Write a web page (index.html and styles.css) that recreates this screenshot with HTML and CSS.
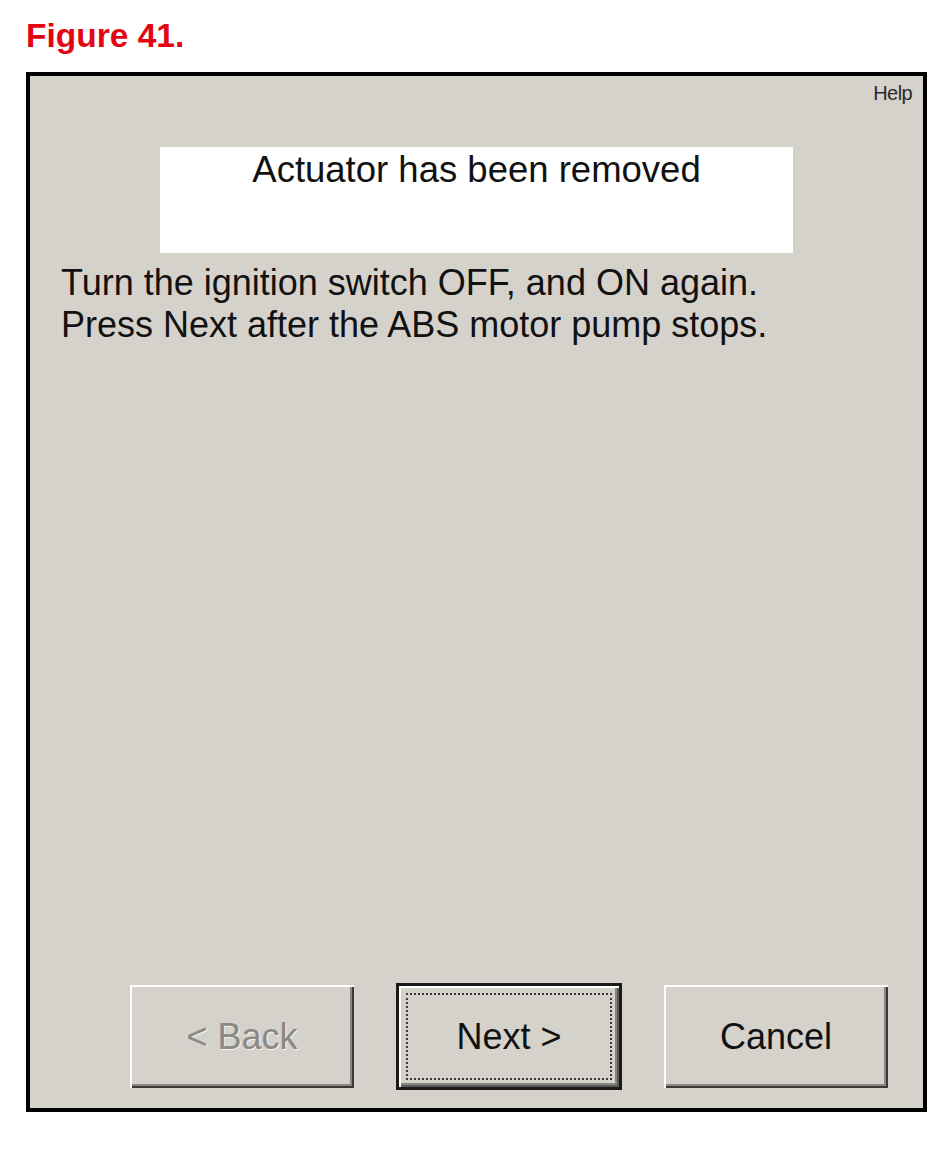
FILE: index.html
```html
<!DOCTYPE html>
<html>
<head>
<meta charset="utf-8">
<link rel="stylesheet" href="styles.css">
</head>
<body>
<h1 class="fig-title">Figure 41.</h1>
<div class="dialog">
  <div class="help-row"><span class="help">Help</span></div>
  <div class="status-box">Actuator has been removed</div>
  <p class="instructions">Turn the ignition switch OFF, and ON again.<br>Press Next after the ABS motor pump stops.</p>
  <div class="spacer"></div>
  <div class="button-row">
    <button class="btn btn-disabled">&lt; Back</button>
    <button class="btn btn-default"><span class="focus">Next &gt;</span></button>
    <button class="btn">Cancel</button>
  </div>
</div>
</body>
</html>
```
FILE: styles.css
```css
html, body {
  margin: 0;
  padding: 0;
  background: #ffffff;
}
body {
  font-family: "Liberation Sans", Arial, sans-serif;
  width: 949px;
  height: 1153px;
  overflow: hidden;
}
.fig-title {
  margin: 0;
  padding: 18px 0 0 26px;
  height: 72px;
  box-sizing: border-box;
  font-size: 33.5px;
  line-height: 36px;
  font-weight: bold;
  color: #e30613;
}
.dialog {
  margin-left: 26px;
  width: 901px;
  height: 1040px;
  box-sizing: border-box;
  border: 4px solid #000;
  background: #d5d1cb;
  display: flex;
  flex-direction: column;
}
.help-row {
  display: flex;
  justify-content: flex-end;
  padding: 7px 11px 0 0;
}
.help {
  font-size: 20px;
  line-height: 20px;
  color: #2a2a2a;
  letter-spacing: -0.6px;
}
.status-box {
  margin: 44px 0 0 130px;
  width: 633px;
  height: 106px;
  box-sizing: border-box;
  padding-top: 5px;
  background: #fff;
  text-align: center;
  font-size: 36.5px;
  line-height: 35px;
  color: #111;
}
.instructions {
  margin: 9px 0 0 0;
  padding-left: 31px;
  font-size: 36px;
  line-height: 42px;
  color: #111;
}
.spacer {
  flex: 1;
}
.button-row {
  display: flex;
  align-items: center;
  gap: 42px;
  padding: 0 0 18px 100px;
}
.btn {
  width: 224px;
  height: 103px;
  background: #d5d1cb;
  border: none;
  font-family: "Liberation Sans", Arial, sans-serif;
  font-size: 36px;
  color: #111;
  padding: 0;
  box-shadow: inset 2px 2px 0 #ffffff, inset -2px -2px 0 #3a3a3a, inset -4px -4px 0 #8a8782;
  display: flex;
  align-items: center;
  justify-content: center;
}
.btn-disabled {
  color: #8a8884;
  text-shadow: 1px 1px 0 #f4f2ee;
}
.btn-default {
  width: 226px;
  height: 107px;
  box-shadow: inset 0 0 0 3px #1a1a1a, inset 5px 5px 0 #ffffff, inset -5px -5px 0 #5a5a5a, inset -7px -7px 0 #8a8782;
}
.focus {
  display: flex;
  align-items: center;
  justify-content: center;
  width: 206px;
  height: 87px;
  box-sizing: border-box;
  border: 2px dotted #3a3a3a;
}
```
